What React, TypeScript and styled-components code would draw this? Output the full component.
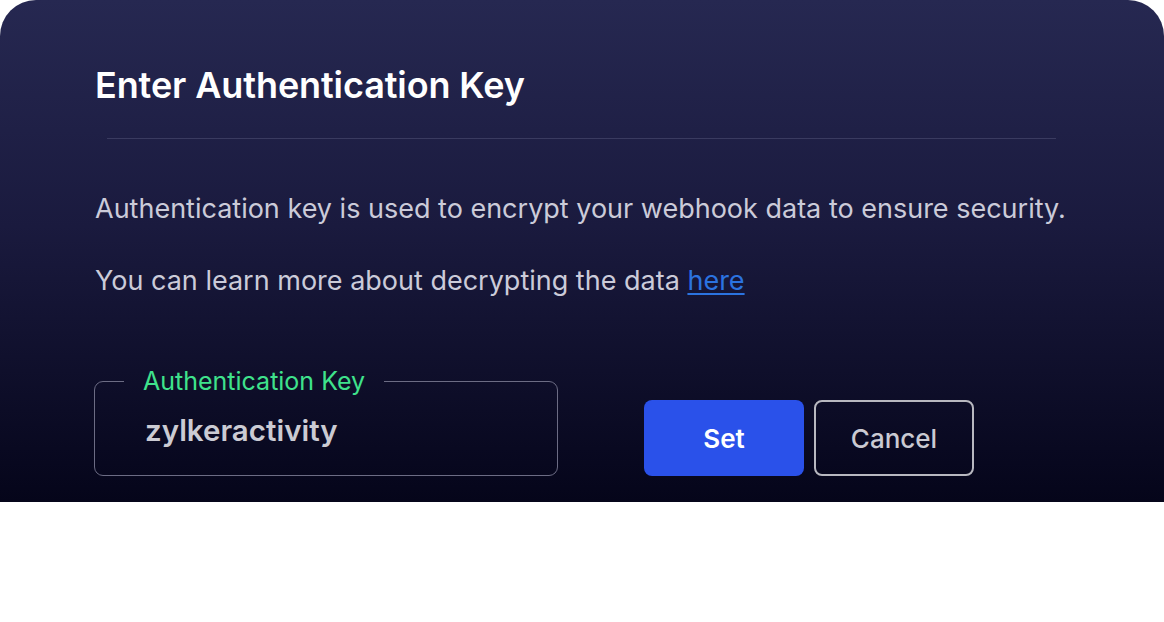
import styled, { createGlobalStyle } from "styled-components";

const GlobalStyle = createGlobalStyle`
  html, body {
    margin: 0;
    padding: 0;
    background: #ffffff;
  }
  body {
    font-family: Inter, "Noto Sans", sans-serif;
  }
`;

function App() {
  return (
    <>
      <GlobalStyle />
      <Card>
        <Title>Enter Authentication Key</Title>
        <Divider />
        <Text>Authentication key is used to encrypt your webhook data to ensure security.</Text>
        <Text>
          You can learn more about decrypting the data <LinkText href="#">here</LinkText>
        </Text>
        <Actions>
          <KeyField>
            <Legend>Authentication Key</Legend>
            <KeyValue>zylkeractivity</KeyValue>
          </KeyField>
          <Buttons>
            <Button $primary>Set</Button>
            <Button>Cancel</Button>
          </Buttons>
        </Actions>
      </Card>
    </>
  );
}

const Card = styled.div`
  box-sizing: border-box;
  width: 100%;
  height: 502px;
  padding: 60px 96px 0 94px;
  border-radius: 36px 36px 0 0;
  background: linear-gradient(180deg, #262851 0%, #1a1a3e 45%, #05051a 100%);
  display: flex;
  flex-direction: column;
`;

const Title = styled.h1`
  margin: 0 0 0 1px;
  font-size: 36px;
  line-height: 50px;
  font-weight: 600;
  color: #ffffff;
  letter-spacing: -0.1px;
`;

const Divider = styled.hr`
  margin: 28px 12px 0 13px;
  border: none;
  height: 1px;
  background: #3a3b60;
`;

const Text = styled.p`
  margin: 52px 0 0 1px;
  font-size: 27px;
  line-height: 35px;
  color: #cbcbd9;
  & + & {
    margin-top: 37px;
  }
`;

const LinkText = styled.a`
  color: #2b73e0;
  text-decoration: underline;
  text-underline-offset: 3px;
`;

const Actions = styled.div`
  display: flex;
  align-items: flex-end;
  gap: 86px;
  margin-top: 71px;
`;

const KeyField = styled.fieldset`
  box-sizing: border-box;
  width: 464px;
  height: 107px;
  margin: 0;
  padding: 0 0 0 50px;
  border: 1px solid #6c6c84;
  border-radius: 9px;
`;

const Legend = styled.legend`
  margin-left: -21px;
  padding: 0 19px;
  font-size: 25px;
  line-height: 24px;
  color: #3fe28c;
`;

const KeyValue = styled.div`
  margin-top: 19px;
  font-size: 29.5px;
  font-weight: 600;
  color: #cbcbd3;
`;

const Buttons = styled.div`
  display: flex;
  gap: 10px;
`;

const Button = styled.button<{ $primary?: boolean }>`
  box-sizing: border-box;
  width: 160px;
  height: 76px;
  border-radius: 8px;
  font-family: Inter, "Noto Sans", sans-serif;
  font-size: 26px;
  font-weight: ${(p) => (p.$primary ? 600 : 500)};
  cursor: pointer;
  background: ${(p) => (p.$primary ? "#2a51ea" : "transparent")};
  color: ${(p) => (p.$primary ? "#ffffff" : "#cacad2")};
  border: ${(p) => (p.$primary ? "none" : "2.5px solid #b8b8c0")};
`;

export default App;
